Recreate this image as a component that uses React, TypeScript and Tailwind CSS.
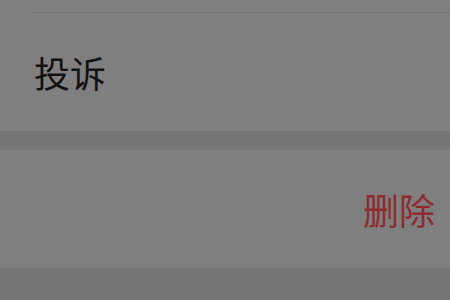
import React from 'react';

const App = () => {
  return (
    <div
      className="w-[450px] h-[300px] overflow-hidden bg-[#767676]"
      style={{ fontFamily: '"Noto Sans CJK SC", "Noto Sans", sans-serif' }}
    >
      {/* upper sheet */}
      <div className="bg-[#7f7f7f]">
        <div className="h-[12px]" />
        <div className="ml-[32px] h-px bg-[#727272]" />
        <div className="h-[118px] flex items-center pl-[34px]">
          <span className="text-[36px] leading-none text-[#121212]">投诉</span>
        </div>
      </div>

      <div className="h-[19px] bg-[#767676]" />

      {/* delete action */}
      <div className="h-[118px] bg-[#7f7f7f] flex items-center justify-end pr-[15px]">
        <span className="text-[36px] leading-none text-[#8e2b2f]">删除</span>
      </div>

      <div className="h-[32px] bg-[#767676]" />
    </div>
  );
};

export default App;
